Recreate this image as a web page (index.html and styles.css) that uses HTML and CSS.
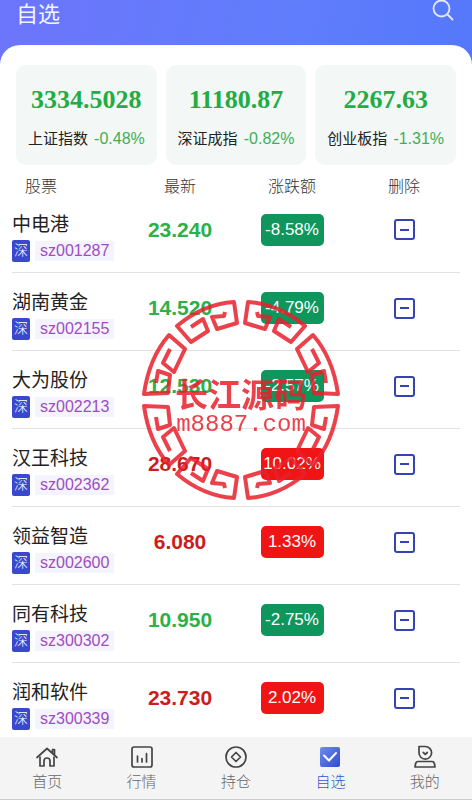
FILE: index.html
```html
<!DOCTYPE html>
<html lang="zh-CN">

<head>
    <meta charset="UTF-8">
    <meta name="viewport" content="width=device-width, initial-scale=1.0">
    <title>自选</title>
    <link rel="stylesheet" href="styles.css">
</head>

<body>
    <div class="app">
        <header class="header">
            <h1>自选</h1>
            <button class="search" type="button" aria-label="搜索">
                <svg width="22" height="22" viewBox="0 0 22 22" fill="none" stroke="#e4e9ff" stroke-width="1.8" stroke-linecap="round">
                    <circle cx="9.5" cy="8.5" r="8" />
                    <path d="M15.500 14.500l5 5" />
                </svg>
            </button>
        </header>

        <main class="panel">
            <section class="indexes">
                <div class="index-card">
                    <strong>3334.5028</strong>
                    <p>上证指数 <span>-0.48%</span></p>
                </div>
                <div class="index-card">
                    <strong>11180.87</strong>
                    <p>深证成指 <span>-0.82%</span></p>
                </div>
                <div class="index-card">
                    <strong>2267.63</strong>
                    <p>创业板指 <span>-1.31%</span></p>
                </div>
            </section>

            <table class="stocks">
                <thead>
                    <tr>
                        <th>股票</th>
                        <th>最新</th>
                        <th>涨跌额</th>
                        <th>删除</th>
                    </tr>
                </thead>
                <tbody>
                    <tr>
                        <td>
                            <div class="name">中电港</div>
                            <div class="code"><i>深</i><span>sz001287</span></div>
                        </td>
                        <td class="price down">23.240</td>
                        <td><span class="rate rate-down">-8.58%</span></td>
                        <td><button class="remove" type="button" aria-label="删除"></button></td>
                    </tr>
                    <tr>
                        <td>
                            <div class="name">湖南黄金</div>
                            <div class="code"><i>深</i><span>sz002155</span></div>
                        </td>
                        <td class="price down">14.520</td>
                        <td><span class="rate rate-down">-4.79%</span></td>
                        <td><button class="remove" type="button" aria-label="删除"></button></td>
                    </tr>
                    <tr>
                        <td>
                            <div class="name">大为股份</div>
                            <div class="code"><i>深</i><span>sz002213</span></div>
                        </td>
                        <td class="price down">12.530</td>
                        <td><span class="rate rate-down">-2.57%</span></td>
                        <td><button class="remove" type="button" aria-label="删除"></button></td>
                    </tr>
                    <tr>
                        <td>
                            <div class="name">汉王科技</div>
                            <div class="code"><i>深</i><span>sz002362</span></div>
                        </td>
                        <td class="price up">28.670</td>
                        <td><span class="rate rate-up">10.02%</span></td>
                        <td><button class="remove" type="button" aria-label="删除"></button></td>
                    </tr>
                    <tr>
                        <td>
                            <div class="name">领益智造</div>
                            <div class="code"><i>深</i><span>sz002600</span></div>
                        </td>
                        <td class="price up">6.080</td>
                        <td><span class="rate rate-up">1.33%</span></td>
                        <td><button class="remove" type="button" aria-label="删除"></button></td>
                    </tr>
                    <tr>
                        <td>
                            <div class="name">同有科技</div>
                            <div class="code"><i>深</i><span>sz300302</span></div>
                        </td>
                        <td class="price down">10.950</td>
                        <td><span class="rate rate-down">-2.75%</span></td>
                        <td><button class="remove" type="button" aria-label="删除"></button></td>
                    </tr>
                    <tr>
                        <td>
                            <div class="name">润和软件</div>
                            <div class="code"><i>深</i><span>sz300339</span></div>
                        </td>
                        <td class="price up">23.730</td>
                        <td><span class="rate rate-up">2.02%</span></td>
                        <td><button class="remove" type="button" aria-label="删除"></button></td>
                    </tr>
                </tbody>
            </table>
        </main>

        <nav class="tabbar">
            <a href="#">
                <svg width="24" height="24" viewBox="0 0 24 24" fill="none" stroke="#444" stroke-width="1.7" stroke-linejoin="round" stroke-linecap="round">
                    <path d="M2 12.500L12 3.500l10 9M17.500 8V4.500h2v5" />
                    <path d="M5 12v9h4v-5a3 3 0 0 1 6 0v5h4v-9" />
                </svg>
                首页
            </a>
            <a href="#">
                <svg width="24" height="24" viewBox="0 0 24 24" fill="none" stroke="#444" stroke-width="1.7">
                    <rect x="2" y="2" width="20" height="20" rx="2" />
                    <path d="M7.500 11v6M12 13.500V17M16.500 8.500V17" stroke-linecap="round" />
                </svg>
                行情
            </a>
            <a href="#">
                <svg width="24" height="24" viewBox="0 0 24 24" fill="none" stroke="#444" stroke-width="1.7">
                    <circle cx="12" cy="12" r="10" />
                    <path d="M12 7.500l4.500 4.500-4.500 4.500L7.500 12z" stroke-linejoin="round" />
                </svg>
                持仓
            </a>
            <a href="#" class="active">
                <svg width="24" height="24" viewBox="0 0 24 24" fill="none">
                    <defs>
                        <linearGradient id="tick" x1="0" y1="0" x2="1" y2="1">
                            <stop offset="0" stop-color="#6f8df0" />
                            <stop offset="1" stop-color="#2f4ad0" />
                        </linearGradient>
                    </defs>
                    <rect x="2" y="2" width="20" height="20" rx="2" fill="url(#tick)" />
                    <path d="M6 10.500l5 5 7-7.500" stroke="#fff" stroke-width="2" stroke-linecap="round" />
                </svg>
                自选
            </a>
            <a href="#">
                <svg width="24" height="24" viewBox="0 0 24 24" fill="none" stroke="#444" stroke-width="1.7" stroke-linejoin="round" stroke-linecap="round">
                    <path d="M6 1.500h6.300a6.300 6.300 0 1 1-6.300 6.300z" />
                    <path d="M10.300 7.500l2 1.800 2-1.800" />
                    <path d="M5 16.500h14q2 0 2.500 2.500l.5 3H2l.5-3q.5-2.500 2.500-2.500z" />
                </svg>
                我的
            </a>
        </nav>

        <svg class="watermark" width="206" height="206" viewBox="-103 -103 206 206">
            <defs>
                <!-- one quarter of the meander ring -->
                <g id="quarter">
                    <path d="M16 -88L17 -84L29 -83L24 -71L4 -77L7 -98Q38 -96 64 -74L50 -58L33 -69L38 -81L50 -73" />
                    <path d="M71 -51L78 -37L67 -28L56 -51L72 -65Q92 -42 97 -6L73 -7L71 -25L83 -29L85 -17" />
                </g>
            </defs>
            <g class="ring">
                <use href="#quarter" />
                <use href="#quarter" transform="scale(-1 1)" />
                <use href="#quarter" transform="scale(1 -1)" />
                <use href="#quarter" transform="scale(-1 -1)" />
            </g>
            <text class="mark-name" x="0" y="7">长江源码</text>
            <text class="mark-site" x="0" y="31">m8887.com</text>
        </svg>
    </div>
</body>

</html>
```
FILE: styles.css
```css
* {
    box-sizing: border-box;
}

body {
    margin: 0;
    font-family: "Liberation Sans", "Noto Sans CJK SC", sans-serif;
    color: #222;
}

h1,
p {
    margin: 0;
}

button {
    padding: 0;
    border: none;
    background: none;
    cursor: pointer;
}

.app {
    position: relative;
    display: flex;
    flex-direction: column;
    height: 100vh;
    overflow: hidden;
    background: linear-gradient(100deg, #6c75fb 0%, #5f7dfc 50%, #4d74fa 100%);
}

/* Header */
.header {
    display: flex;
    justify-content: space-between;
    align-items: flex-start;
    height: 45px;
    padding: 0 18px 0 16px;
    flex-shrink: 0;
}

.header h1 {
    font-size: 22px;
    font-weight: 400;
    line-height: 30px;
    color: #f2f4ff;
}

.search svg {
    display: block;
}

/* White panel */
.panel {
    flex: 1;
    min-height: 0;
    overflow: auto;
    scrollbar-width: none;
    background: #fff;
    border-radius: 20px 20px 0 0;
    padding: 20px 12px 0;
}

.indexes {
    display: grid;
    grid-template-columns: repeat(3, 1fr);
    gap: 9px;
    padding: 0 4px;
}

.index-card {
    height: 100px;
    padding-top: 20px;
    background: #f3f8f7;
    border-radius: 10px;
    text-align: center;
    white-space: nowrap;
}

.index-card strong {
    display: block;
    font-family: "Liberation Serif", serif;
    font-size: 26px;
    line-height: 30px;
    color: #22ac43;
}

.index-card p {
    margin-top: 12px;
    font-size: 15px;
    line-height: 24px;
}

.index-card span {
    margin-left: 2px;
    font-size: 16px;
    color: #3fae57;
}

/* Stock list */
.stocks {
    width: 100%;
    table-layout: fixed;
    border-collapse: collapse;
    text-align: center;
}

.stocks th {
    padding: 15px 0 0;
    font-size: 16px;
    font-weight: 300;
    line-height: 14px;
    color: #333;
}

.stocks th:first-child {
    padding-left: 13px;
    text-align: left;
}

.stocks td {
    height: 78px;
    padding: 0 0 6px;
    border-bottom: 1px solid #e2e2e2;
}

.stocks td:first-child {
    padding: 8px 0 0;
    text-align: left;
}

.name {
    font-size: 19px;
    line-height: 26px;
}

.code {
    display: flex;
    align-items: center;
    gap: 5px;
    margin-top: 2px;
    font-size: 16px;
    line-height: 20px;
}

.code i {
    width: 18px;
    height: 22px;
    border-radius: 2px;
    background: #3a48cf;
    color: #fff;
    font-size: 14px;
    font-weight: 300;
    font-style: normal;
    line-height: 20px;
    text-align: center;
}

.code span {
    padding: 0 5px;
    background: #f3f4fd;
    color: #a04cc0;
}

.price {
    font-size: 21px;
    font-weight: bold;
}

.up {
    color: #cd1c1c;
}

.down {
    color: #2bb148;
}

.rate {
    display: inline-block;
    width: 63px;
    border-radius: 5px;
    color: #fff;
    font-size: 17px;
    line-height: 32px;
    vertical-align: middle;
}

.rate-up {
    background: #f01414;
}

.rate-down {
    background: #0f965c;
}

.remove {
    display: inline-flex;
    justify-content: center;
    align-items: center;
    width: 21px;
    height: 21px;
    border: 2px solid #3444b4;
    border-radius: 3px;
    vertical-align: middle;
}

.remove::before {
    content: "";
    width: 9px;
    height: 2px;
    background: #3444b4;
}

/* Bottom tabs */
.tabbar {
    display: flex;
    flex-shrink: 0;
    height: 63px;
    padding-top: 8px;
    background: #f4f4f4;
    border-bottom: 1px solid #ccc;
}

.tabbar a {
    flex: 1;
    display: flex;
    flex-direction: column;
    align-items: center;
    gap: 2px;
    font-size: 15px;
    font-weight: 300;
    line-height: 22px;
    color: #666;
    text-decoration: none;
}

.tabbar .active {
    color: #3558d0;
}

/* Watermark stamp over the list */
.watermark {
    position: absolute;
    left: 51%;
    top: 50%;
    transform: translate(-50%, -50%);
    pointer-events: none;
    opacity: 0.85;
}

.ring {
    fill: none;
    stroke: #e8202c;
    stroke-width: 4;
    stroke-linejoin: round;
}

.watermark text {
    fill: #e8202c;
    text-anchor: middle;
}

.mark-name {
    font-size: 33px;
    font-weight: bold;
}

.mark-site {
    font-family: "Liberation Mono", monospace;
    font-size: 24px;
}
```
